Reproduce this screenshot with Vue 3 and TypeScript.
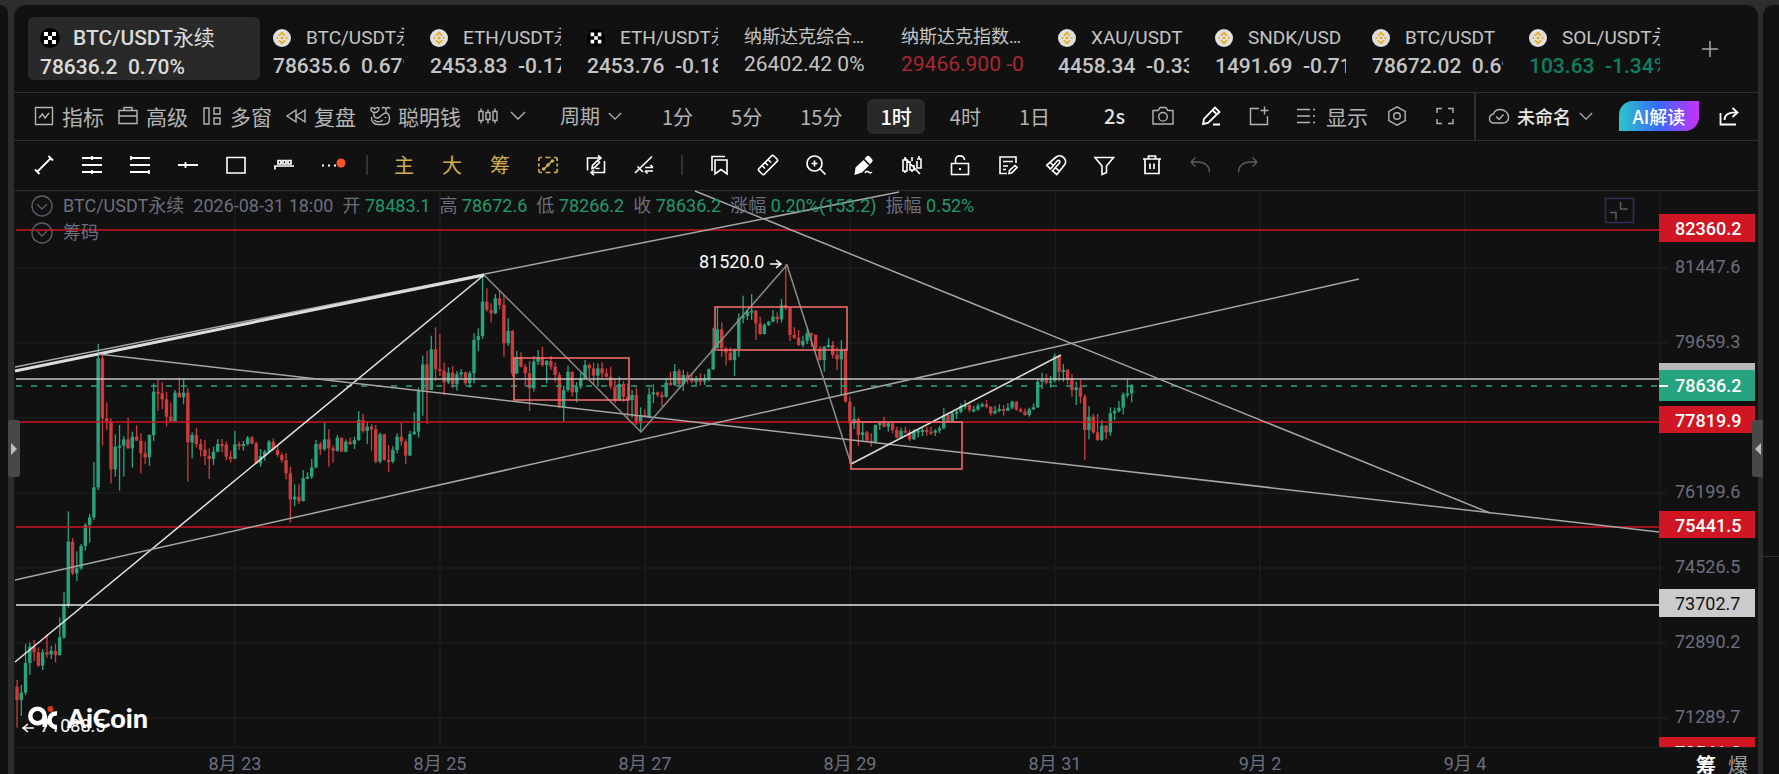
<script setup lang="ts">
interface Tab { title: string; value: string; icon: 'okx' | 'bnb' | 'none'; tone?: string }
interface Icon { d: string; f?: string; w?: number }

const current = { title: 'BTC/USDT', kind: '永续', value: '78636.2  0.70%' }
const tabs: Tab[] = [
  { title: 'BTC/USDT永续', value: '78635.6  0.67%', icon: 'bnb' },
  { title: 'ETH/USDT永续', value: '2453.83  -0.17%', icon: 'bnb' },
  { title: 'ETH/USDT永续', value: '2453.76  -0.18%', icon: 'okx' },
  { title: '纳斯达克综合指数', value: '26402.42 0%', icon: 'none' },
  { title: '纳斯达克指数期货', value: '29466.900 -0', icon: 'none', tone: 'down' },
  { title: 'XAU/USDT', value: '4458.34  -0.33%', icon: 'bnb' },
  { title: 'SNDK/USD', value: '1491.69  -0.71%', icon: 'bnb' },
  { title: 'BTC/USDT', value: '78672.02  0.69%', icon: 'bnb' },
  { title: 'SOL/USDT永续', value: '103.63  -1.34%', icon: 'bnb', tone: 'up' },
]

const icons: Record<string, Icon> = {
  indicator: { d: 'M1.5 1.5h17v17h-17zM5 12l3.5-4 2.5 4 4-5' },
  briefcase: { d: 'M1 4.5h18v13H1zM6 4.5V1.5h8v3M1 10h18' },
  windows: { d: 'M2 2h5v16H2zM12 2h6v6h-6zM12 12h6v6h-6z' },
  rewind: { d: 'M10 4v12L1 10zM19 4v12l-9-6z' },
  whale: { d: 'M4.5 6.5C2 6.500.5 4.500 1 2c1.800-.5 3.200 0 3.700 1C6 1.500 8 1.200 9 2c0 2.500-1.500 4.500-4.500 4.500zM4 7c-1 4 2 6 5 4.500 2.500-1.500 4-4.500 6.500-4.500C18 7 19.500 9.500 19.500 13c0 4-2 5.500-6 5.500H8c-4 0-7-3-6.500-7.500M16 7V3M16 3c-1-2-3-2-4-.5M16 3c1-2 3-2 4-.5M15.500 11v1M4 14c3 2.500 6 2.500 9 0' },
  candles: { d: 'M1 5.500h4v9H1zM8 6.500h4v7H8zM15 5.500h4v9h-4zM3 2.500v3M3 14.500v3M10 3.500v3M10 13.500v4M17 2.500v3M17 14.500v3' },
  camera: { d: 'M0 4.500h5L7.200 1.500h5.600L15 4.500h5v13.500H0zM10 6.500a4.300 4.300 0 100 8.600 4.300 4.300 0 000-8.600z' },
  pencil: { d: 'M2 18l1-5L14 1.500 18.500 6 7 17zM11.500 4l4.500 4.500M12 18.500h7', w: 1.8 },
  addbox: { d: 'M10 2.500H1.500v16h17V10M15.500 0.500v8M11.500 4.500h8' },
  list: { d: 'M0 3.500h13M0 10h13M0 16.500h13M16 3.500h2M16 10h2M16 16.500h2' },
  hex: { d: 'M10 .8l8.200 4.700v9L10 19.200l-8.200-4.700v-9zM10 6.700a3.300 3.300 0 100 6.600 3.300 3.300 0 000-6.600z' },
  full: { d: 'M2 7V2.500h5M13 2.500h5V7M18 13v4.500h-5M7 17.500H2V13' },
  cloud: { d: 'M5 17C2 17 .5 15 .5 12.500 .5 10 2 8.500 4.500 8 5.500 5 8 3.500 11 3.500c4 0 8.500 3 8.500 7.500 0 4-2.500 6-6 6zM7 10.500l3 3 4.500-5' },
  share: { d: 'M1.500 7v11.500H17M5.500 14c0-5 3.500-8 12.500-7.500M13.500 2l5 4.500-5 4.500', w: 1.8 },
  segment: { d: 'M3 17L17 3M1 14.500l4.500 4.500M14.500 1L19 5.500', w: 1.8 },
  channel: { d: 'M0 3h20M0 10h20M0 17h20M10 1v4M10 15v4', w: 1.8 },
  levels: { d: 'M1 3h19M0 10h20M0 17h19M1 1v4M19 15v4', w: 1.8 },
  hline: { d: 'M0 10h20M7.500 7v6', w: 1.8 },
  square: { d: 'M1 2.500h18v15.500H1z', w: 1.6 },
  comb: { d: 'M1 14.500v-3.500h19M4 5.500h3V9H4zM9 5.500h3V9H9zM14 5.500h3V9h-3z', w: 1.7 },
  more: { d: '', f: 'M0 9.500h2v2H0zM6 9.500h2v2H6zM12 9.500h2v2h-2z' },
  magic: { d: 'M4 2.500H2.500Q.8 2.500.8 4.500V6M7.500 2.500h5M16 2.500h1.500q1.700 0 1.700 2V6M19.200 8.500v3M19.200 14v1.500q0 2-1.700 2H16M12.500 17.500h-5M4 17.500H2.500q-1.700 0-1.700-2V14M.8 11.500v-3M5.500 14.500l9-9', f: 'M3.800 14a1.800 1.800 0 103.600 0 1.800 1.800 0 10-3.600 0M8.200 10a1.800 1.800 0 103.600 0 1.800 1.800 0 10-3.600 0M12.600 6a1.800 1.800 0 103.600 0 1.800 1.800 0 10-3.600 0', w: 1.7 },
  swap: { d: 'M1.500 15.500V3h13.500M12 .3l3 2.700-3 2.700M18.500 6v11.500H5M8 14.800l-3 2.700 3 2.700M6 13.500l.5-3 5-5 2 2-5 5zM9.500 13.500h4', w: 1.6 },
  slash: { d: 'M1 18L18 1.500M3.500 11.500l5.500 5.500M11 12.500h8M16.500 10l2.500 2.500M19 16h-8M13.500 18.500L11 16', w: 1.7 },
  bookmark: { d: 'M5 5h12v14l-6-4.500L5 19zM2 16V1.500h13', w: 1.6 },
  ruler: { d: 'M1 13.500L13.500 1c.8-.8 1.600-.8 2.400 0L19 4c.8.8.8 1.600 0 2.400L6.500 19c-.8.8-1.600.8-2.400 0L1 15.900c-.8-.8-.8-1.600 0-2.400zM4.500 11l2.500 2.500M7.500 8l2.500 2.500M10.500 5l2.500 2.500', w: 1.6 },
  zoomin: { d: 'M8.500 1a7.500 7.500 0 100 15 7.500 7.500 0 000-15zM14 14l5.500 5.500M8.500 5.500v6M5.500 8.500h6', w: 1.7 },
  marker: { d: 'M11 18c1-2 2.500-2 3.500-1s2 1.500 3.500 0', f: 'M9.500 5l5.500 5.500L8 17.500 0.500 20 1.500 12.500zM12.500 1.500q1.500-1.500 3 0l2.500 2.500q1.500 1.500 0 3l-2 2.300-5.500-5.600z', w: 1.6 },
  nocandles: { d: 'M1 5h4v11H1zM8 6v9h4v-5M15 6v7h4V4h-4M3 2v3M3 16v2M17 1v3M10 15v2M3 3l15 16M10 2v4', w: 1.6 },
  unlock: { d: 'M1.500 8.500h17v11h-17zM5.500 8.500V5c0-5.500 8.500-5.500 9 0', f: 'M9 13h2v2H9z', w: 1.6 },
  note: { d: 'M18 8V2H2v16.500h7M5 6.500h10M5 11h5M5 14.500h3M11 18.500l.5-3 5.500-5 2 2-5.500 5.500z', w: 1.6 },
  magnet: { d: 'M.8 10.200L9.500 2.500C15-2.500 23 5 18 10.500L10.800 19.500 6.500 15.800 13.500 8c1.200-1.600-.6-3.400-2.200-2.200L4.500 14zM4.200 7.300l3.500 3.700M9.300 12.600l4 3.600', w: 1.7 },
  filter: { d: 'M1 2.500h18.500L12.500 11v6.500L8 19.500V11z', w: 1.6 },
  trash: { d: 'M1 4h18M3 4v14.500h14V4M6.500 4V1h7v3M8 8.500v5.500M12 8.500v5.500', w: 1.7 },
  undo: { d: 'M5.500 2.500L1 7l4.500 4.500M1 7h7c7 0 11.500 4 11.500 10.500' },
  redo: { d: 'M14.500 2.500L19 7l-4.500 4.500M19 7h-7C5 7 .5 11 .5 17.500' },
}

const menu = [
  { icon: 'indicator', label: '指标' },
  { icon: 'briefcase', label: '高级' },
  { icon: 'windows', label: '多窗' },
  { icon: 'rewind', label: '复盘' },
  { icon: 'whale', label: '聪明钱' },
]
const periods = ['1分', '5分', '15分', '1时', '4时', '1日']
const drawA = ['segment', 'channel', 'levels', 'hline', 'square', 'comb', 'more']
const drawB = ['magic', 'swap', 'slash']
const drawC = ['bookmark', 'ruler', 'zoomin', 'marker', 'nocandles', 'unlock', 'note', 'magnet', 'filter', 'trash', 'undo', 'redo']

const legend = [
  ['开', '78483.1'], ['高', '78672.6'], ['低', '78266.2'],
  ['收', '78636.2'], ['涨幅', '0.20%(153.2)'], ['振幅', '0.52%'],
]

/* high, low, close of each hourly bar, in thirds of a unit below the 240 mark */
const bars: number[] = [
  1320,1463,1380, 1335,1428,1358, 1212,1365,1269, 1207,1305,1220, 1200,1263,1237, 1222,1281,1277,
  1227,1290,1237, 1182,1253,1243, 1217,1257,1233, 1212,1267,1245, 1133,1247,1192, 1056,1197,1095,
  814,1103,905, 894,1005,1000, 934,1023,985, 912,990,918, 850,932,855, 822,908,832,
  666,840,742, 312,750,355, 342,617,535, 487,570,545, 535,730,688, 583,710,620,
  555,752,617, 588,710,598, 533,627,625, 575,683,590, 556,603,602, 580,700,640,
  605,672,652, 583,677,585, 430,603,455, 418,513,460, 427,507,478, 455,560,530,
  488,545,545, 450,545,458, 413,472,472, 417,493,458, 443,725,607, 577,655,585,
  563,622,612, 597,650,630, 600,675,648, 625,717,657, 620,675,635, 597,637,612,
  597,637,614, 605,660,650, 632,668,657, 573,657,613, 605,630,616, 603,632,612,
  588,617,593, 588,613,610, 605,672,670, 627,680,648, 630,662,635, 600,637,605,
  595,632,630, 617,650,645, 638,668,660, 640,718,700, 680,848,778, 733,798,770,
  733,793,783, 690,785,715, 697,718,710, 657,717,682, 600,685,612, 605,645,628,
  548,632,598, 567,680,625, 617,668,632, 585,635,593, 593,635,635, 598,637,605,
  593,615,612, 590,627,600, 513,603,540, 522,578,573, 543,612,560, 552,632,568,
  555,670,665, 578,670,583, 582,662,660, 615,695,665, 618,670,630, 580,640,590,
  547,617,605, 598,672,647, 573,648,582, 517,585,575, 443,593,452, 347,527,373,
  333,552,450, 287,450,328, 262,423,387, 282,408,392, 368,465,427, 382,432,398,
  378,445,433, 393,452,403, 387,413,397, 395,435,430, 393,443,400, 280,430,300,
  265,333,288, 110,297,185, 145,215,210, 190,247,220, 162,222,175, 152,208,195,
  165,350,310, 235,318,273, 270,410,400, 333,403,352, 337,382,380, 372,440,400,
  363,513,445, 348,455,365, 330,375,352, 320,380,375, 360,430,363, 348,390,380,
  367,427,405, 397,505,500, 437,545,450, 377,455,395, 395,470,457, 427,487,440,
  397,447,415, 360,415,375, 370,415,385, 368,435,407, 370,440,385, 367,413,400,
  385,413,410, 380,447,440, 415,490,482, 410,480,432, 423,485,470, 430,538,480,
  450,533,465, 443,555,550, 502,578,525, 507,530,532, 443,535,463, 433,490,457,
  455,472,465, 455,500,470, 415,473,428, 395,438,435, 372,438,393, 387,437,433,
  390,453,405, 395,430,415, 400,430,425, 408,435,418, 400,437,425, 403,435,415,
  385,425,388, 263,390,325, 203,310,268, 247,350,325, 320,377,338, 322,362,360,
  325,408,330, 220,350,235, 167,250,228, 207,240,215, 162,240,212, 210,300,250,
  230,285,282, 250,283,255, 243,258,245, 210,247,230, 217,250,238, 177,247,195,
  72,210,203, 200,303,285, 262,297,293, 270,318,315, 287,322,303, 268,312,280,
  278,320,285, 283,330,325, 318,362,360, 318,395,320, 295,325,315, 303,355,345,
  322,390,358, 300,465,328, 325,487,485, 470,672,550, 500,567,537, 532,617,585,
  548,603,577, 572,605,602, 580,620,607, 553,607,555, 543,570,548, 530,562,560,
  545,575,550, 547,580,570, 560,595,593, 563,597,572, 560,580,577, 568,603,598,
  567,600,575, 568,592,572, 560,588,570, 560,587,575, 560,585,578, 567,588,572,
  558,580,565, 503,568,525, 518,548,545, 515,548,520, 507,537,515, 490,520,498,
  480,507,495, 487,517,510, 497,517,508, 490,513,497, 488,502,493, 480,505,500,
  498,527,520, 497,523,512, 493,517,507, 495,527,512, 490,513,503, 482,508,485,
  483,513,508, 503,517,515, 505,527,525, 503,530,508, 490,510,502, 417,503,425,
  398,447,418, 402,433,428, 408,443,422, 340,428,348, 345,425,395, 372,425,390,
  387,433,418, 402,470,450, 425,495,442, 418,490,470, 463,660,570, 498,598,530,
  522,582,577, 522,603,600, 540,603,557, 555,597,577, 502,587,520, 503,540,513,
  483,518,503, 457,523,463, 417,473,460, 432,487,435,
]
const fy = (v: number): number => 240 + v / 3
const candles = Array.from({ length: bars.length / 3 }, (_, i) => {
  const [high, low, close] = bars.slice(i * 3, i * 3 + 3)
  const open = i === 0 ? 1340 : bars[i * 3 - 1]
  return {
    x: 17 + (i * 205) / 48,
    high: fy(high),
    low: fy(low),
    top: fy(Math.min(open, close)),
    size: Math.max(2, Math.abs(open - close) / 3),
    color: close > open ? '#cd3c3d' : '#26a480',
  }
})

const rows = [268, 343, 418, 493, 568, 643, 718]
const dates = ['8月 23', '8月 25', '8月 27', '8月 29', '8月 31', '9月 2', '9月 4'].map((label, i) => ({ label, x: 235 + i * 205 }))
const prices = [
  { y: 267, t: '81447.6' }, { y: 342, t: '79659.3' }, { y: 492, t: '76199.6' },
  { y: 567, t: '74526.5' }, { y: 642, t: '72890.2' }, { y: 717, t: '71289.7' },
]
const tags = [
  { y: 214, h: 28, t: '82360.2', bg: '#d01523', fg: '#fff' },
  { y: 363, h: 28, t: '', bg: '#b7b7b7', fg: '#111' },
  { y: 370, h: 31, t: '78636.2', bg: '#26a480', fg: '#fff' },
  { y: 406, h: 27, t: '77819.9', bg: '#d01523', fg: '#fff' },
  { y: 511, h: 27, t: '75441.5', bg: '#d01523', fg: '#fff' },
  { y: 589, h: 28, t: '73702.7', bg: '#cbcbcb', fg: '#111' },
]
const levels = [
  { y: 230, c: '#d01523' }, { y: 379, c: '#c4c4c4' }, { y: 422, c: '#d01523' },
  { y: 527, c: '#d01523' }, { y: 605, c: '#e4e4e4' },
]
const lines = [
  { d: 'M15 367L899 192', c: '#a5a5a5', w: 1.5 },
  { d: 'M15 371L484 275', c: '#dcdcdc', w: 3 },
  { d: 'M15 662L484 275', c: '#e6e6e6', w: 1.5 },
  { d: 'M15 580L1359 279', c: '#a5a5a5', w: 1.5 },
  { d: 'M98 354L1659 532', c: '#a5a5a5', w: 1.5 },
  { d: 'M695 191L1490 513', c: '#a5a5a5', w: 1.5 },
  { d: 'M484 275L641 432L787 265L851 464', c: '#8c8c8c', w: 1.5 },
  { d: 'M851 464L1061 355', c: '#dcdcdc', w: 1.5 },
]
const zones = [
  { x: 514, y: 358, w: 115, h: 42 }, { x: 715, y: 307, w: 132, h: 43 }, { x: 851, y: 422, w: 111, h: 47 },
]
</script>

<template>
  <div class="shell">
    <aside class="side side-left"></aside>
    <main class="panel">
      <nav class="tabs" aria-label="自选">
        <button class="tab current">
          <span class="title">
            <svg class="coin big" viewBox="0 0 20 20"><circle cx="10" cy="10" r="10" fill="#000" /><path fill="#fff" d="M4 4h4v4H4zM12 4h4v4h-4zM8 8h4v4H8zM4 12h4v4H4zM12 12h4v4h-4z" /></svg>
            <span>{{ current.title }}<em>{{ current.kind }}</em></span>
          </span>
          <span class="value">{{ current.value }}</span>
        </button>
        <button v-for="(t, i) in tabs" :key="i" class="tab" :class="[t.tone, { plain: t.icon === 'none' }]">
          <span class="title">
            <svg v-if="t.icon === 'okx'" class="coin" viewBox="0 0 20 20"><circle cx="10" cy="10" r="10" fill="#000" /><path fill="#fff" d="M4 4h4v4H4zM12 4h4v4h-4zM8 8h4v4H8zM4 12h4v4H4zM12 12h4v4h-4z" /></svg>
            <svg v-else-if="t.icon === 'bnb'" class="coin" viewBox="0 0 20 20"><circle cx="10" cy="10" r="10" fill="#e0e0e0" /><path fill="none" stroke="#e9ac12" stroke-width="1.900" d="M6.500 7.500L10 4l3.500 3.500M6.500 12.500L10 16l3.500-3.500" /><path fill="#e9ac12" d="M10 8l2 2-2 2-2-2zM4.800 8.500L6.300 10l-1.500 1.500L3.300 10zM15.200 8.500l1.500 1.500-1.500 1.500-1.500-1.500z" /></svg>
            <span class="name">{{ t.title }}</span>
          </span>
          <span class="value">{{ t.value }}</span>
        </button>
        <button class="add" aria-label="添加"><svg viewBox="0 0 20 20"><path d="M10 2v16M2 10h16" /></svg></button>
      </nav>

      <div class="bar">
        <div class="menu">
          <button v-for="m in menu" :key="m.icon" class="tool">
            <svg class="ico" viewBox="0 0 20 20"><path :d="icons[m.icon].d" /></svg>{{ m.label }}
          </button>
        </div>
        <button class="tool style-pick" aria-label="图表类型">
          <svg class="ico" viewBox="0 0 20 20"><path :d="icons.candles.d" /></svg>
          <svg class="chev wide" viewBox="0 0 16 10"><path d="M1 1l7 7 7-7" /></svg>
        </button>
        <button class="tool cycle">周期<svg class="chev" viewBox="0 0 16 10"><path d="M1 1l7 7 7-7" /></svg></button>
        <div class="periods">
          <button v-for="p in periods" :key="p" :class="{ on: p === '1时' }">{{ p }}</button>
        </div>
        <div class="actions">
          <button class="tool bright">2s</button>
          <button class="tool" aria-label="截图"><svg class="ico" viewBox="0 0 20 20"><path :d="icons.camera.d" /></svg></button>
          <button class="tool white" aria-label="画线"><svg class="ico" viewBox="0 0 20 20"><path :d="icons.pencil.d" :stroke-width="icons.pencil.w" /></svg></button>
          <button class="tool" aria-label="新增"><svg class="ico" viewBox="0 0 20 20"><path :d="icons.addbox.d" /></svg></button>
          <button class="tool show"><svg class="ico" viewBox="0 0 20 20"><path :d="icons.list.d" /></svg>显示</button>
          <button class="tool" aria-label="设置"><svg class="ico" viewBox="0 0 20 20"><path :d="icons.hex.d" /></svg></button>
          <button class="tool" aria-label="全屏"><svg class="ico" viewBox="0 0 20 20"><path :d="icons.full.d" /></svg></button>
        </div>
        <div class="account">
          <button class="tool layout"><svg class="ico" viewBox="0 0 20 20"><path :d="icons.cloud.d" /></svg><span>未命名</span><svg class="chev" viewBox="0 0 16 10"><path d="M1 1l7 7 7-7" /></svg></button>
          <button class="ai">AI解读</button>
          <button class="tool white" aria-label="分享"><svg class="ico" viewBox="0 0 20 20"><path :d="icons.share.d" :stroke-width="icons.share.w" /></svg></button>
        </div>
      </div>

      <div class="draw">
        <button v-for="n in drawA" :key="n" :aria-label="n">
          <svg class="ico" viewBox="0 0 20 20"><path :d="icons[n].d" :stroke-width="icons[n].w" /><path v-if="icons[n].f" class="solid" :d="icons[n].f" /><circle v-if="n === 'more'" cx="19" cy="8" r="4.500" class="dot" /></svg>
        </button>
        <i class="split"></i>
        <button class="gold">主</button>
        <button class="gold">大</button>
        <button class="gold">筹</button>
        <button v-for="n in drawB" :key="n" :class="{ gold: n === 'magic' }" :aria-label="n">
          <svg class="ico" viewBox="0 0 20 20"><path :d="icons[n].d" :stroke-width="icons[n].w" /><path v-if="icons[n].f" class="solid" :d="icons[n].f" /></svg>
        </button>
        <i class="split second"></i>
        <button v-for="n in drawC" :key="n" :class="{ dim: n === 'undo' || n === 'redo' }" :aria-label="n">
          <svg class="ico" viewBox="0 0 20 20"><path :d="icons[n].d" :stroke-width="icons[n].w" /><path v-if="icons[n].f" class="solid" :d="icons[n].f" /></svg>
        </button>
      </div>

      <section class="chart">
        <svg class="plot" viewBox="14 191 1744 583">
          <defs><clipPath id="axis"><rect x="1659" y="192" width="96" height="555" /></clipPath></defs>
          <g stroke="#1c1d20" stroke-width="1.500">
            <line v-for="y in rows" :key="y" x1="15" x2="1668" :y1="y" :y2="y" />
            <line v-for="d in dates" :key="d.x" :x1="d.x" :x2="d.x" y1="192" y2="747" />
            <line x1="1660" x2="1660" y1="192" y2="747" />
            <line x1="15" x2="1755" y1="747.500" y2="747.500" />
          </g>
          <g v-for="(c, i) in candles" :key="i">
            <rect :x="c.x - 0.6" :y="c.high" width="1.300" :height="c.low - c.high" :fill="c.color" />
            <rect :x="c.x - 1.7" :y="c.top" width="3.400" :height="c.size" :fill="c.color" />
          </g>
          <line v-for="l in levels" :key="l.y" x1="16" x2="1659" :y1="l.y" :y2="l.y" :stroke="l.c" stroke-width="1.500" />
          <line x1="16" x2="1659" y1="386" y2="386" stroke="#26a480" stroke-width="1.500" stroke-dasharray="6 9" />
          <path v-for="l in lines" :key="l.d" :d="l.d" fill="none" :stroke="l.c" :stroke-width="l.w" />
          <rect v-for="z in zones" :key="z.x" :x="z.x" :y="z.y" :width="z.w" :height="z.h" fill="none" stroke="#fb6f6f" stroke-width="1.500" />

          <text class="num light" x="699" y="268">81520.0</text>
          <path d="M770 264h10M776 260l5 4-5 4" fill="none" stroke="#fff" stroke-width="1.600" />
          <text class="num light" x="40" y="732">71088.5</text>
          <path d="M34 728H24M28 724l-5 4 5 4" fill="none" stroke="#fff" stroke-width="1.600" />

          <g class="logo">
            <circle cx="37.500" cy="716" r="7.200" fill="#111" stroke="#fff" stroke-width="4.500" />
            <path d="M42.500 716v11H47v-11z" fill="#fff" />
            <path d="M57 713.500c-10-1-10 14 0 13.500" fill="#111" stroke="#fff" stroke-width="4.500" />
            <circle cx="50.500" cy="709" r="3" fill="#d33a1d" />
            <text x="67" y="728">AiCoin</text>
          </g>

          <g clip-path="url(#axis)">
            <text v-for="p in prices" :key="p.t" class="num" x="1675" :y="p.y + 6">{{ p.t }}</text>
            <g v-for="t in tags" :key="t.y">
              <rect x="1659" :y="t.y" width="96" :height="t.h" :fill="t.bg" />
              <text class="num" :class="t.fg === '#fff' ? 'on-color' : 'on-light'" x="1675" :y="t.y + (t.h > 30 ? 22 : 21)">{{ t.t }}</text>
            </g>
            <rect x="1659" y="737" width="96" height="28" fill="#d01523" />
            <text class="num on-color" x="1675" y="759">70541.3</text>
            <path d="M1659 386h9" stroke="#fff" stroke-width="2" />
          </g>
          <text v-for="d in dates" :key="d.label" class="num" :x="d.x" y="770" text-anchor="middle">{{ d.label }}</text>
          <g fill="none"><rect x="1605.500" y="198.500" width="28" height="24" stroke="#2c3359" stroke-width="1.500" /><path d="M1620.500 202v7h7M1610 212.500h6v7" stroke="#5a5d68" stroke-width="1.500" /></g>
        </svg>
        <div class="legend">
          <p><svg class="fold" viewBox="0 0 22 22"><circle cx="11" cy="11" r="10" /><path d="M6 9l5 5 5-5" /></svg>
            <span>BTC/USDT永续</span><span>2026-08-31 18:00</span>
            <span v-for="l in legend" :key="l[0]">{{ l[0] }} <b>{{ l[1] }}</b></span>
          </p>
          <p><svg class="fold" viewBox="0 0 22 22"><circle cx="11" cy="11" r="10" /><path d="M6 9l5 5 5-5" /></svg><span>筹码</span></p>
        </div>
        <div class="modes"><button class="on">筹</button><button>爆</button></div>
      </section>
      <button class="handle left" aria-label="展开左侧"><svg viewBox="0 0 6 12"><path d="M0 0l6 6-6 6z" /></svg></button>
      <button class="handle right" aria-label="展开右侧"><svg viewBox="0 0 6 12"><path d="M6 0L0 6l6 6z" /></svg></button>
    </main>
    <aside class="side side-right"><i></i></aside>
  </div>
</template>

<style>
body { margin: 0; background: #2d2d2d; overflow: hidden; }
</style>

<style scoped>
* { box-sizing: border-box; }
.shell { display: flex; height: 100vh; padding-top: 5px; background: #2d2d2d; font-family: Roboto, "Noto Sans CJK SC", sans-serif; color: #b4b4b4; overflow: hidden; }
button { background: none; border: 0; padding: 0; margin: 0; color: inherit; font: inherit; cursor: pointer; }
svg { display: block; flex: none; overflow: visible; }
.side { background: #111; flex: none; }
.side-left { width: 8px; margin-right: 6px; border-top-right-radius: 10px; }
.side-right { width: 16px; margin-left: 5px; border-top-left-radius: 10px; padding-top: 551px; }
.side-right i { display: block; height: 1px; background: #303030; }
.panel { position: relative; flex: 1; min-width: 0; background: #111; border-radius: 12px 12px 0 0; display: flex; flex-direction: column; }

.tabs { display: flex; align-items: flex-start; gap: 26px; height: 88px; padding: 12px 14px 0; border-bottom: 1px solid #303030; }
.tab { flex: 0 0 131px; min-width: 0; height: 63px; padding-top: 7px; overflow: hidden; text-align: left; color: #c4c4c4; display: flex; flex-direction: column; }
.tab .title { display: flex; align-items: center; height: 28px; gap: 15px; font-size: 19px; line-height: 28px; white-space: nowrap; }
.tab .value { height: 28px; font-size: 21px; line-height: 28px; font-weight: 500; white-space: pre; }
.coin { width: 18px; height: 18px; }
.coin.big { width: 20px; height: 20px; }
.tab.plain .title { font-size: 18px; height: 25px; line-height: 25px; }
.tab.plain .name { overflow: hidden; text-overflow: ellipsis; width: 127px; }
.tab.plain .value { font-weight: 400; height: 31px; line-height: 31px; }
.tab.current { flex-basis: 232px; margin-right: -13px; padding-left: 12px; border-radius: 6px; background: #292929; color: #dadada; }
.tab.current .title { font-size: 21px; gap: 13px; height: 29px; font-weight: 500; }
.tab.current .value { height: 30px; line-height: 30px; }
.tab em { font-style: normal; font-weight: 400; }
.tab.down .value { color: #ab2632; }
.tab.up .value { color: #0b8060; }
.add { width: 48px; height: 63px; display: flex; align-items: center; justify-content: center; }
.add svg { width: 20px; stroke: #a8a8a8; stroke-width: 1.5; }

.bar { display: flex; align-items: center; height: 48px; padding-left: 20px; padding-bottom: 1px; border-bottom: 1px solid #303030; font-family: "Noto Sans CJK SC", sans-serif; font-size: 21px; line-height: 28px; white-space: nowrap; }
.menu { display: flex; gap: 14px; }
.tool { display: flex; align-items: center; gap: 8px; }
.ico { width: 20px; height: 20px; fill: none; stroke: currentColor; stroke-width: 1.4; }
.chev { width: 14px; height: 9px; fill: none; stroke: currentColor; stroke-width: 1.4; }
.chev.wide { width: 16px; height: 10px; }
.style-pick { margin-left: 17px; gap: 12px; }
.cycle { margin-left: 34px; font-size: 20px; }
.periods { display: flex; gap: 12px; margin-left: 27px; font-size: 20px; }
.periods button { height: 35px; padding: 0 13px; border-radius: 6px; line-height: 33px; }
.periods .on { background: #292929; color: #fff; font-weight: 500; }
.actions { display: flex; align-items: center; gap: 28px; margin-left: auto; margin-right: 19px; }
.bright { color: #e0e0e0; font-weight: 500; font-size: 20px; }
.white { color: #fff; }
.show { gap: 9px; margin-right: -9px; }
.account { display: flex; align-items: center; height: 47px; gap: 20px; padding: 0 19px 0 13px; border-left: 2px solid #303030; }
.layout { margin-right: 6px; }
.layout span { color: #e8e8e8; font-size: 18px; font-weight: 500; }
.ai { width: 80px; height: 30px; border-radius: 14px 0 14px 0; background: linear-gradient(90deg, #2bc6cb, #3a68fb 50%, #c930f8); color: #fff; font-size: 18px; font-weight: 500; line-height: 28px; }

.draw { display: flex; align-items: center; height: 50px; padding-left: 6px; padding-bottom: 2px; border-bottom: 1px solid #303030; color: #fff; }
.draw button { flex: 0 0 48px; height: 36px; display: flex; align-items: center; justify-content: center; font-size: 20px; }
.draw .gold { color: #d0ae50; }
.draw .dim { color: #5c5c5c; }
.solid { fill: currentColor; stroke: none; }
.dot { fill: #f8532a; stroke: none; }
.split { width: 2px; height: 20px; background: #333; margin: 0 12px 0 10px; }
.split.second { margin: 0 13px 0 13px; }

.chart { position: relative; }
.plot { width: 100%; height: auto; }
.num { font: 18px Roboto, "Noto Sans CJK SC", sans-serif; fill: #6b6f7f; }
.num.light { fill: #fff; }
.num.on-color { fill: #fff; font-weight: 500; }
.num.on-light { fill: #111; }
.logo text { font: 900 27px Lato, sans-serif; fill: #fff; }
.legend { position: absolute; left: 17px; top: 1px; font-size: 18px; color: #6b6e7e; }
.legend p { display: flex; align-items: center; gap: 10px; height: 27px; margin: 0; line-height: 24px; white-space: nowrap; }
.legend span + span { margin-left: -1px; }
.legend b { color: #20996f; font-weight: 400; }
.fold { width: 22px; height: 22px; fill: none; stroke: #5b5c66; stroke-width: 1.4; }
.modes { position: absolute; right: 10px; bottom: -6px; display: flex; gap: 12px; font-size: 20px; line-height: 28px; color: #a0a0a0; }
.modes .on { color: #fff; font-weight: 700; }

.handle { position: absolute; top: 415px; height: 57px; background: #484848; display: flex; align-items: center; justify-content: center; }
.handle svg { width: 6px; height: 12px; fill: #bdbdbd; }
.handle.left { left: -6px; width: 12px; border-radius: 3px; }
.handle.right { right: -5px; width: 11px; border-radius: 3px 0 0 3px; }
</style>
